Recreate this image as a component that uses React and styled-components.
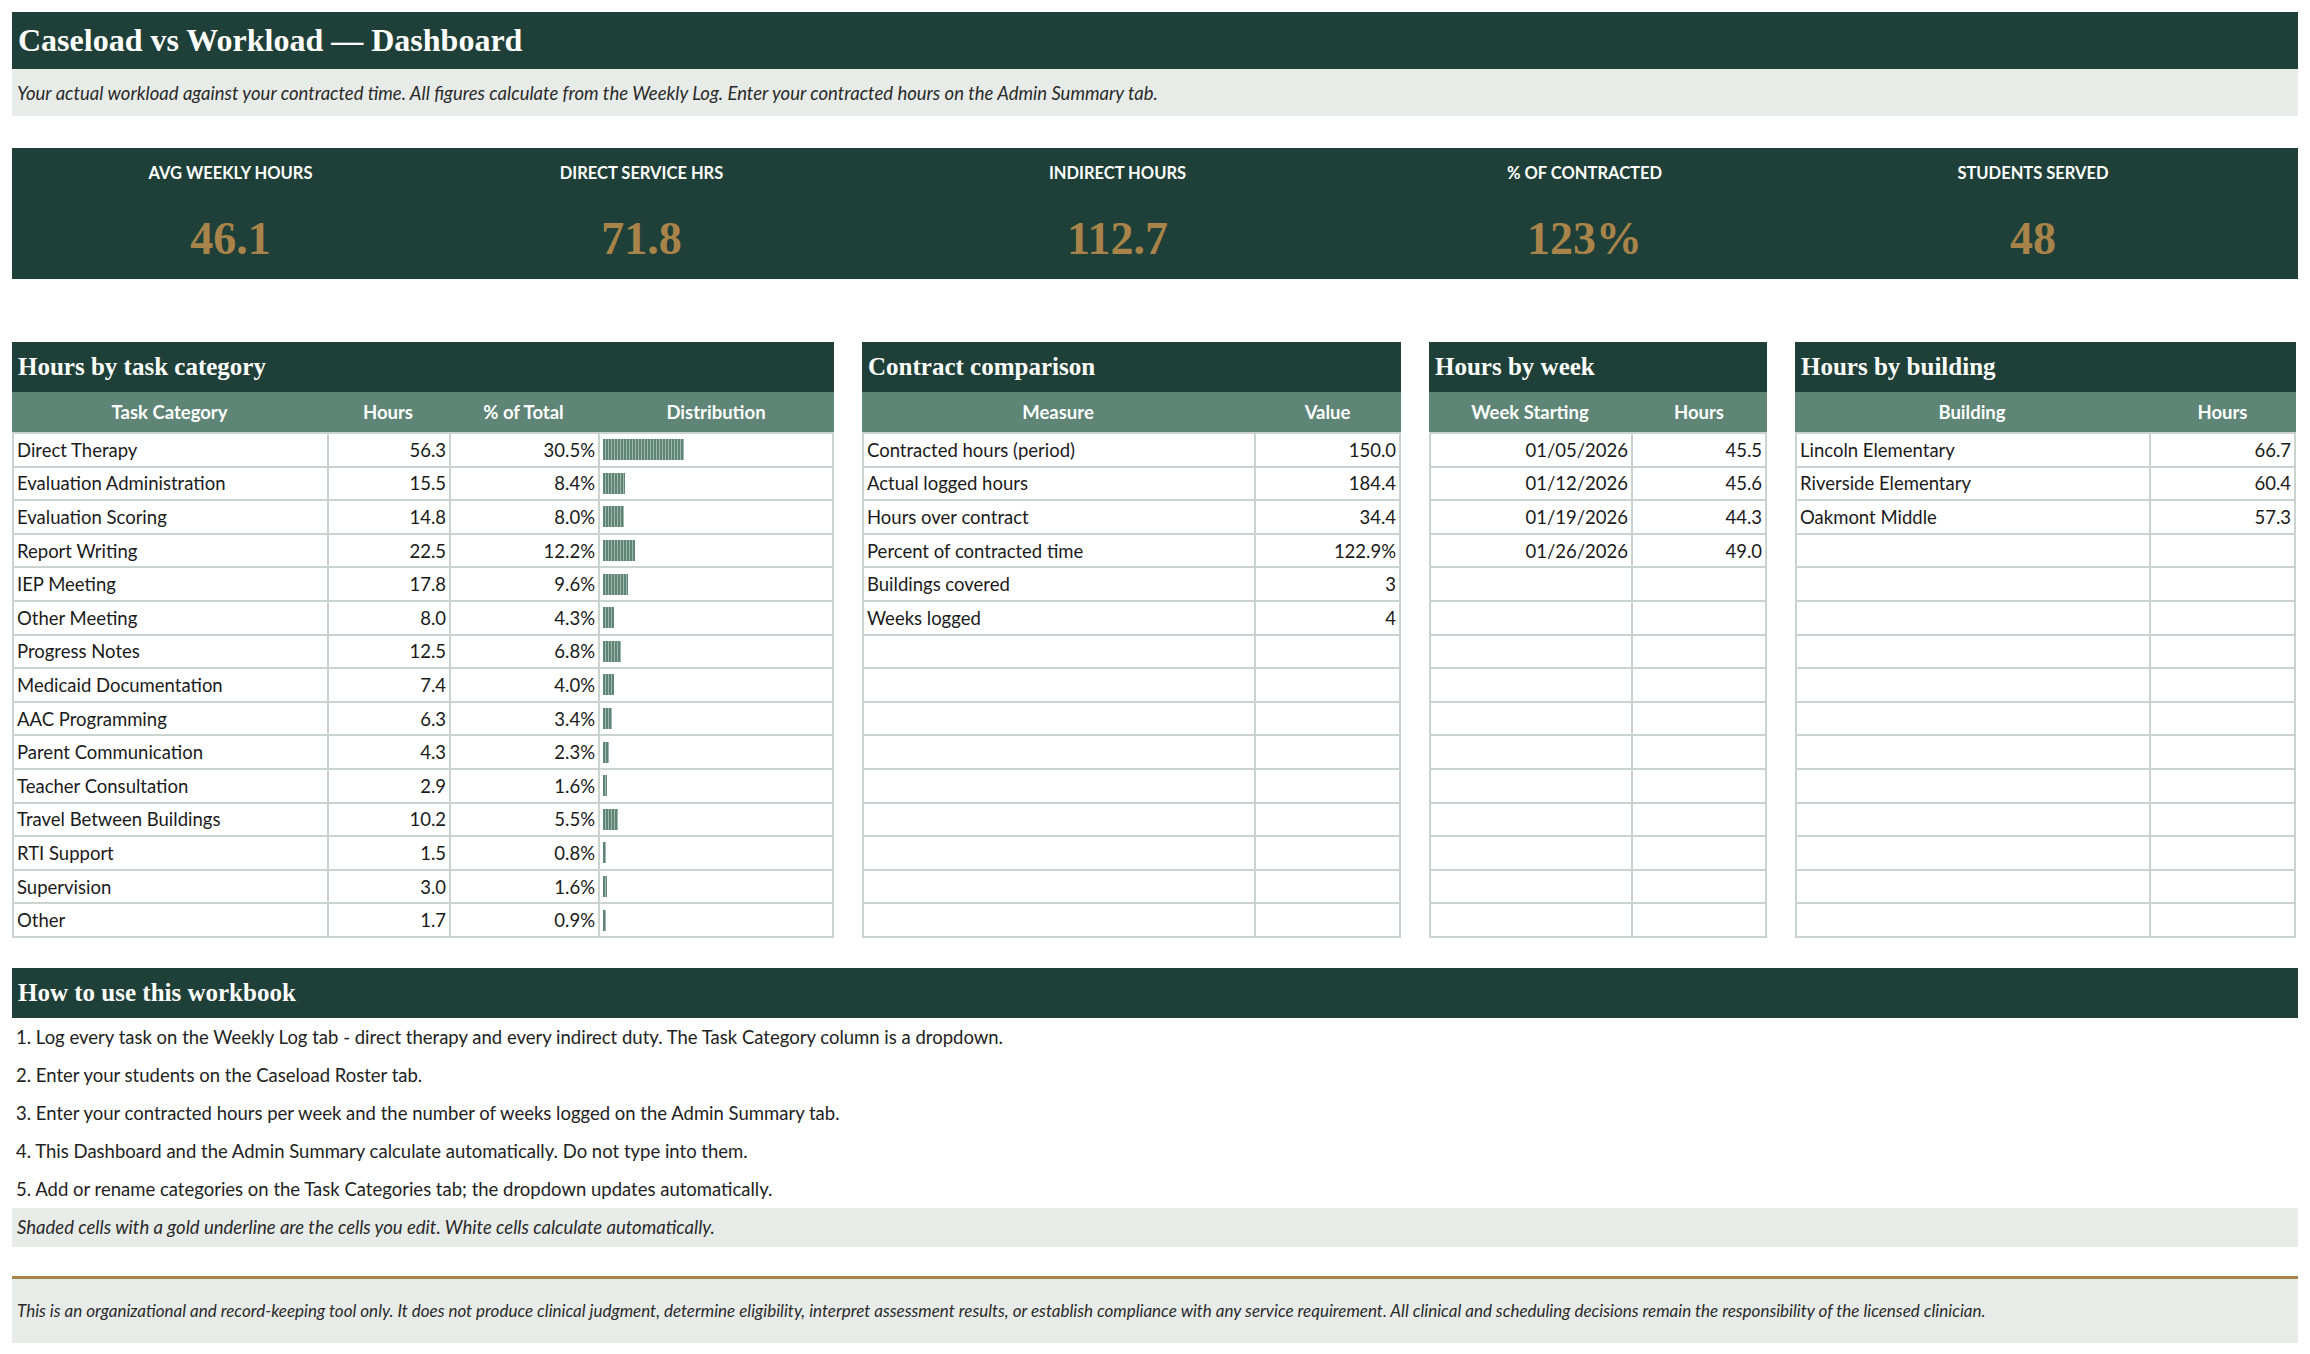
import React from 'react';
import styled, { createGlobalStyle } from 'styled-components';

const GlobalStyle = createGlobalStyle`
  body {
    margin: 0;
    background: #ffffff;
    font-family: Lato, "Open Sans", sans-serif;
    color: #1a1a1a;
  }
`;

const DARK = '#1f4038';
const MID = '#5e8576';
const GOLD = '#a8844b';
const SHADE = '#e8ece9';
const LINE = '#c9d4cf';

const Page = styled.div`
  width: 2286px;
  padding: 12px 12px 0;
  display: flex;
  flex-direction: column;
`;

const TitleBar = styled.div`
  background: ${DARK};
  height: 57px;
  display: flex;
  align-items: center;
  padding: 0 6px;
  font-family: "Liberation Serif", serif;
  font-weight: 700;
  font-size: 32px;
  color: #fff;
`;

const Note = styled.div`
  background: ${SHADE};
  height: ${p => p.h || 40}px;
  display: flex;
  align-items: center;
  padding: 0 5px;
  font-style: italic;
  font-size: ${p => p.size || 18.5}px;
  color: #2a2a2a;
  margin-top: ${p => p.mt || 0}px;
  border-top: ${p => (p.gold ? `3px solid ${GOLD}` : 'none')};
`;

const KpiBand = styled.div`
  margin-top: 32px;
  height: 131px;
  background: ${DARK};
  display: grid;
  grid-template-columns: 437px 385px 567px 367px 530px;
`;

const Kpi = styled.div`
  display: flex;
  flex-direction: column;
  align-items: center;
  padding-top: 10px;
`;

const KpiLabel = styled.div`
  color: #fff;
  font-weight: 700;
  font-size: 16.5px;
  height: 30px;
  display: flex;
  align-items: center;
`;

const KpiValue = styled.div`
  color: ${GOLD};
  font-family: "Liberation Serif", serif;
  font-weight: 700;
  font-size: 46px;
  margin-top: 24px;
`;

const PanelRow = styled.div`
  margin-top: 63px;
  display: flex;
  gap: 28px;
`;

const Panel = styled.div`
  width: ${p => p.w}px;
  display: flex;
  flex-direction: column;
`;

const PanelTitle = styled.div`
  background: ${DARK};
  height: 50px;
  display: flex;
  align-items: center;
  padding: 0 6px;
  color: #fff;
  font-family: "Liberation Serif", serif;
  font-weight: 700;
  font-size: 25px;
`;

const Grid = styled.div`
  display: grid;
  grid-template-columns: ${p => p.cols};
`;

const Head = styled.div`
  background: ${MID};
  color: #fff;
  font-weight: 700;
  font-size: 18.5px;
  height: 40px;
  display: flex;
  align-items: center;
  justify-content: center;
  border-bottom: 2px solid ${LINE};
`;

const Cell = styled.div`
  height: 31.6px;
  border-bottom: 2px solid ${LINE};
  border-left: ${p => (p.first ? `2px solid ${LINE}` : `2px solid ${LINE}`)};
  border-right: ${p => (p.last ? `2px solid ${LINE}` : 'none')};
  display: flex;
  align-items: center;
  justify-content: ${p => (p.right ? 'flex-end' : 'flex-start')};
  padding: 0 3px;
  font-size: 18.5px;
  white-space: nowrap;
  overflow: hidden;
`;

const Bar = styled.div`
  height: 21px;
  background: repeating-linear-gradient(90deg, ${MID} 0 2px, #9fb8ad 2px 3px);
`;

const Section = styled.div`
  margin-top: 30px;
  display: flex;
  flex-direction: column;
`;

const Step = styled.div`
  height: 38px;
  display: flex;
  align-items: center;
  padding: 0 4px;
  font-size: 18.5px;
  color: #222;
`;

const tasks = [
  ['Direct Therapy', '56.3', 30.5],
  ['Evaluation Administration', '15.5', 8.4],
  ['Evaluation Scoring', '14.8', 8.0],
  ['Report Writing', '22.5', 12.2],
  ['IEP Meeting', '17.8', 9.6],
  ['Other Meeting', '8.0', 4.3],
  ['Progress Notes', '12.5', 6.8],
  ['Medicaid Documentation', '7.4', 4.0],
  ['AAC Programming', '6.3', 3.4],
  ['Parent Communication', '4.3', 2.3],
  ['Teacher Consultation', '2.9', 1.6],
  ['Travel Between Buildings', '10.2', 5.5],
  ['RTI Support', '1.5', 0.8],
  ['Supervision', '3.0', 1.6],
  ['Other', '1.7', 0.9],
];

const contract = [
  ['Contracted hours (period)', '150.0'],
  ['Actual logged hours', '184.4'],
  ['Hours over contract', '34.4'],
  ['Percent of contracted time', '122.9%'],
  ['Buildings covered', '3'],
  ['Weeks logged', '4'],
];

const weeks = [
  ['01/05/2026', '45.5'],
  ['01/12/2026', '45.6'],
  ['01/19/2026', '44.3'],
  ['01/26/2026', '49.0'],
];

const buildings = [
  ['Lincoln Elementary', '66.7'],
  ['Riverside Elementary', '60.4'],
  ['Oakmont Middle', '57.3'],
];

const pad = (rows) => Array.from({ length: 15 }, (_, i) => rows[i] || ['', '']);

const TwoCol = ({ w, title, cols, heads, rows, firstRight }) => (
  <Panel w={w}>
    <PanelTitle>{title}</PanelTitle>
    <Grid cols={cols}>
      {heads.map(h => <Head key={h}>{h}</Head>)}
      {pad(rows).map((r, i) => (
        <React.Fragment key={i}>
          <Cell right={firstRight}>{r[0]}</Cell>
          <Cell right last>{r[1]}</Cell>
        </React.Fragment>
      ))}
    </Grid>
  </Panel>
);

const kpis = [
  ['AVG WEEKLY HOURS', '46.1'],
  ['DIRECT SERVICE HRS', '71.8'],
  ['INDIRECT HOURS', '112.7'],
  ['% OF CONTRACTED', '123%'],
  ['STUDENTS SERVED', '48'],
];

const steps = [
  '1. Log every task on the Weekly Log tab - direct therapy and every indirect duty. The Task Category column is a dropdown.',
  '2. Enter your students on the Caseload Roster tab.',
  '3. Enter your contracted hours per week and the number of weeks logged on the Admin Summary tab.',
  '4. This Dashboard and the Admin Summary calculate automatically. Do not type into them.',
  '5. Add or rename categories on the Task Categories tab; the dropdown updates automatically.',
];

export default function App() {
  return (
    <Page>
      <GlobalStyle />
      <TitleBar>Caseload vs Workload — Dashboard</TitleBar>
      <Note h={47}>
        Your actual workload against your contracted time. All figures calculate from the Weekly Log. Enter your contracted hours on the Admin Summary tab.
      </Note>

      <KpiBand>
        {kpis.map(([l, v]) => (
          <Kpi key={l}>
            <KpiLabel>{l}</KpiLabel>
            <KpiValue>{v}</KpiValue>
          </Kpi>
        ))}
      </KpiBand>

      <PanelRow>
        <Panel w={822}>
          <PanelTitle>Hours by task category</PanelTitle>
          <Grid cols="315px 122px 149px 236px">
            <Head>Task Category</Head>
            <Head>Hours</Head>
            <Head>% of Total</Head>
            <Head>Distribution</Head>
            {tasks.map(([n, h, p]) => (
              <React.Fragment key={n}>
                <Cell>{n}</Cell>
                <Cell right>{h}</Cell>
                <Cell right>{p.toFixed(1)}%</Cell>
                <Cell last>
                  <Bar style={{ width: `${Math.max(p * 2.65, 3)}px` }} />
                </Cell>
              </React.Fragment>
            ))}
          </Grid>
        </Panel>
        <TwoCol w={539} title="Contract comparison" cols="392px 147px" heads={['Measure', 'Value']} rows={contract} />
        <TwoCol w={338} title="Hours by week" cols="202px 136px" heads={['Week Starting', 'Hours']} rows={weeks} firstRight />
        <TwoCol w={501} title="Hours by building" cols="354px 147px" heads={['Building', 'Hours']} rows={buildings} />
      </PanelRow>

      <Section>
        <PanelTitle>How to use this workbook</PanelTitle>
        {steps.map(s => <Step key={s}>{s}</Step>)}
        <Note h={39}>Shaded cells with a gold underline are the cells you edit. White cells calculate automatically.</Note>
        <Note h={64} mt={29} gold size={17}>
          This is an organizational and record-keeping tool only. It does not produce clinical judgment, determine eligibility, interpret assessment results, or establish compliance with any service requirement. All clinical and scheduling decisions remain the responsibility of the licensed clinician.
        </Note>
      </Section>
    </Page>
  );
}
